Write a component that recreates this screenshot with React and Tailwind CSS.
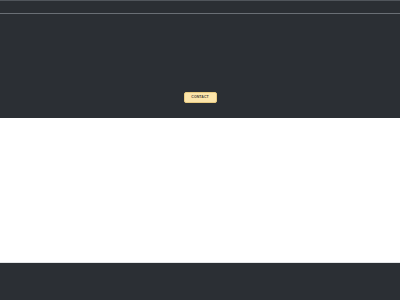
export default function App() {
  return (
    <div className="w-[400px] h-[300px] flex flex-col bg-[#2b2f34] overflow-hidden" style={{ fontFamily: '"Liberation Sans", Arial, sans-serif' }}>
      <header className="h-[118px] flex flex-col bg-[#2b2f34] border-t border-[#50555b]">
        <div className="h-[12px]" />
        <div className="h-px bg-[#6a6f75]" />
        <div className="flex-1 flex items-end justify-center pb-[15px]">
          <button className="w-[33px] h-[11px] rounded-[2px] bg-[#fce5aa] border border-[#e8cb82] flex items-center justify-center text-[3.5px] font-bold tracking-wide text-[#4a4438] leading-none">
            CONTACT
          </button>
        </div>
      </header>
      <main className="h-[145px] bg-white border-b border-[#e2e4e6]" />
      <footer className="flex-1 bg-[#2b2f34]" />
    </div>
  );
}
